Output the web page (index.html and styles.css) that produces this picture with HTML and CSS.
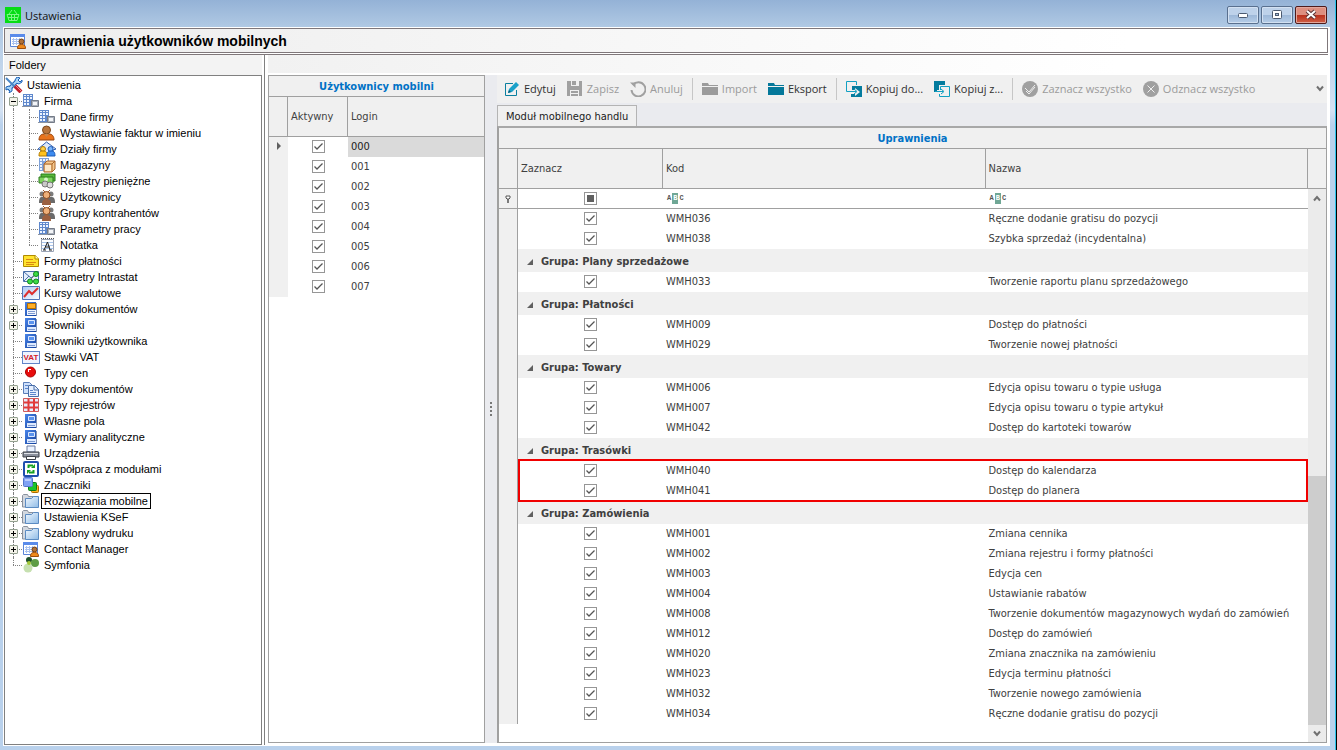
FILE: index.html
```html
<!DOCTYPE html>
<html lang="pl">
<head>
  <meta charset="UTF-8">
  <meta name="viewport" content="width=device-width, initial-scale=1.0">
  <title>Ustawienia</title>
  <link rel="stylesheet" href="styles.css">
</head>
<body>
  <!-- Icon sprite -->
  <svg class="sprite" width="0" height="0" aria-hidden="true">
    <defs>
      <linearGradient id="g-blue" x1="0" y1="0" x2="1" y2="1"><stop offset="0" stop-color="#4a86ea"/><stop offset="1" stop-color="#123f9c"/></linearGradient>
      <linearGradient id="g-folder" x1="0" y1="0" x2="1" y2="1"><stop offset="0" stop-color="#f2f9ff"/><stop offset="1" stop-color="#8fbbe6"/></linearGradient>
      <linearGradient id="g-pale" x1="0" y1="0" x2="1" y2="1"><stop offset="0" stop-color="#a9c8f5"/><stop offset="1" stop-color="#fff"/></linearGradient>
    </defs>
    <symbol id="tools" viewBox="0 0 18 16"><path d="M3 13l9-9" stroke="#1c62b8" stroke-width="4"/><path d="M12 0l-2 3 1 3 3 1 3-2V3l-2 2-2-2 2-2zM1 10l3-1 3 2v3l-3 2 1-2-2-2-2 1z" fill="#a9d6f8" stroke="#1c62b8"/><path d="M4 12l8-8" stroke="#a9d6f8" stroke-width="2"/><path d="M1 1l9 9" stroke="#4a86c4" stroke-width="2"/><path d="M10 9l6 6" stroke="#c01f2c" stroke-width="4"/><path d="M11 9l5 5" stroke="#f0888c"/></symbol>
    <symbol id="building" viewBox="0 0 18 16"><path d="M1 1h10v12H1z" fill="#5f88cc"/><path d="M2 2h2v1H2zM5 2h2v1H5zM8 2h2v1H8zM2 4h2v2H2zM5 4h2v2H5zM8 4h2v2H8zM2 7h2v2H2zM5 7h2v2H5zM2 10h2v2H2zM5 10h2v2H5z" fill="#edf4ff"/><path d="M9.500 7.500h7v6h-7z" fill="#a9afb9" stroke="#747b87"/><path d="M11 9h4v3h-4z" fill="#f2f4f7"/><path d="M0 13.500h10" stroke="#8b93a0"/></symbol>
    <symbol id="person" viewBox="0 0 18 16"><path d="M1 15c0-4 2-6 5-6h5c3 0 5 2 5 6z" fill="#e8731c" stroke="#99440c"/><circle cx="8.500" cy="5" r="4" fill="#b9753c" stroke="#7c481c"/><path d="M6 9l2.500 3L11 9z" fill="#c98448"/></symbol>
    <symbol id="house" viewBox="0 0 18 16"><path d="M0 8l8.500-7L18 8l-3 1v5H3V9z" fill="#dce8fa" stroke="#2d5db0"/><circle cx="5" cy="8" r="2.500" fill="#ffd24a" stroke="#b27a00"/><path d="M1 15c0-4 1-5 4-5s4 1 4 5z" fill="#ffc21e" stroke="#b27a00"/><circle cx="12.500" cy="8" r="2.500" fill="#78b6ff" stroke="#1d5db8"/><path d="M9 15c0-4 1-5 4-5s4 1 4 5z" fill="#3d8bf0" stroke="#1d5db8"/></symbol>
    <symbol id="box" viewBox="0 0 18 16"><path d="M1 1h10v13H1z" fill="#7ea1d8"/><path d="M2 2h2v2H2zM5 2h2v2H5zM8 2h2v2H8zM2 5h2v2H2zM2 8h2v2H2zM2 11h2v2H2z" fill="#edf4ff"/><path d="M6 7l3-3h8v8l-3 3H6z" fill="#f6c98d" stroke="#a9642a"/><path d="M6 7h8v8M14 7l3-3" fill="none" stroke="#a9642a"/><path d="M7 8h6v6H7z" fill="#fde8c8"/></symbol>
    <symbol id="money" viewBox="0 0 18 16"><path d="M3 1h14v7H3z" fill="#57b83a" stroke="#2b7a1c"/><path d="M1 4h14v6H1z" fill="#7fd45f" stroke="#2b7a1c"/><circle cx="8" cy="6.500" r="2" fill="#d6f5c8"/><circle cx="7" cy="11" r="3" fill="#c9c9c9" stroke="#777"/><circle cx="12" cy="12" r="3" fill="#dedede" stroke="#777"/></symbol>
    <symbol id="people" viewBox="0 0 18 16"><circle cx="4" cy="5" r="2.500" fill="#7b7b7b"/><circle cx="13" cy="5" r="2.500" fill="#7b7b7b"/><path d="M1 14c0-5 1-6 3-6h9c3 0 4 1 4 6z" fill="#6a6a6a"/><circle cx="8.500" cy="6" r="3.500" fill="#eeb079" stroke="#8a4c22"/><path d="M4 16c0-4 1-6 4.500-6S13 12 13 16z" fill="#9b6040"/><path d="M5 1l2 2M12 1l-2 2" stroke="#a05a2c"/></symbol>
    <symbol id="note" viewBox="0 0 18 16"><path d="M3.500 2.500h12v12h-12z" fill="#fdfdff" stroke="#9aa3b5"/><path d="M4 5.500h11M4 8.500h11M4 11.500h11" stroke="#a8c4ea"/><path d="M3 1.500h13" stroke="#555" stroke-dasharray="1 1"/><path d="M6 13l3.500-8L12 13M7 10h5M5 13h3M11 13h3" fill="none" stroke="#222"/></symbol>
    <symbol id="card" viewBox="0 0 18 16"><path d="M1.500 2.500h12l3 3v8h-15z" fill="#ffe32e" stroke="#b08a00"/><path d="M13 2v4h4" fill="#fff6a8" stroke="#b08a00"/><path d="M4 6.500h7M4 9.500h10M4 11.500h8" stroke="#d98812"/></symbol>
    <symbol id="mail" viewBox="0 0 18 16"><path d="M1.500 2.500h15v10h-15z" fill="#e6effc" stroke="#4a70a8"/><path d="M2 3l7 6 7-6M2 12l5-5" fill="none" stroke="#4a70a8"/><path d="M7 12l8-8M9 12h5" stroke="#777"/><circle cx="14" cy="5" r="2.500" fill="#3ddc46" stroke="#128a1c"/><circle cx="8" cy="12.500" r="2.500" fill="#3ddc46" stroke="#128a1c"/><circle cx="14" cy="12.500" r="2.500" fill="#3ddc46" stroke="#128a1c"/></symbol>
    <symbol id="chart" viewBox="0 0 18 16"><path d="M.5 1.500h17v13H.5z" fill="url(#g-pale)" stroke="#5376ba"/><path d="M2 12l5-6 3 3 6-6" fill="none" stroke="#dd2f2f" stroke-width="2"/></symbol>
    <symbol id="book-orange" viewBox="0 0 18 16"><path d="M3 1h11v14H3z" fill="url(#g-blue)"/><path d="M5.500 2.500h8v5h-8z" fill="#ffae26" stroke="#b46e00"/><path d="M5 9h9v5H5z" fill="#f2f6ff"/><path d="M6 10.500h7M6 12.500h7" stroke="#7f9bd0"/><path d="M14.500 2v13" stroke="#8193b8"/></symbol>
    <symbol id="book" viewBox="0 0 18 16"><path d="M3 1h11v14H3z" fill="url(#g-blue)"/><path d="M6.500 3.500h6v4h-6z" fill="#5a93ee" stroke="#dce9ff"/><path d="M5 10h9v4H5z" fill="#dce9ff"/><path d="M6 12.500h7" stroke="#7f9bd0"/><path d="M14.500 2v13" stroke="#8193b8"/></symbol>
    <symbol id="ball" viewBox="0 0 18 16"><circle cx="8.500" cy="7" r="5" fill="#e80c0c" stroke="#a00" /><path d="M6 4h3v1H7v2H6z" fill="#fff"/></symbol>
    <symbol id="docs" viewBox="0 0 18 16"><path d="M1.500 1.500h6l3 3v8h-9z" fill="#cfe0fb" stroke="#5a7db8"/><path d="M6.500 4.500h6l4 4v7h-10z" fill="#e6f0ff" stroke="#4a6ea8"/><path d="M12 4v5h5" fill="none" stroke="#4a6ea8"/><path d="M3 4.500h3M3 7.500h3M8 9.500h3M8 11.500h6M8 13.500h6" stroke="#5a86cc"/></symbol>
    <symbol id="grid" viewBox="0 0 18 16"><path d="M1 1h16v14H1z" fill="#e6ecfb"/><path d="M1 5.500h16M1 10.500h16M6.500 1v14M12 1v14" stroke="#e23a3a" stroke-width="2"/><path d="M1.500 1.500h15v13h-15z" fill="none" stroke="#d05a5a"/></symbol>
    <symbol id="printer" viewBox="0 0 18 16"><path d="M5 1h8v6H5z" fill="#eaf2ff" stroke="#6b7ba0"/><path d="M1 7h16v5H1z" fill="#8b909c" stroke="#3c4048"/><path d="M2 8.500h14" stroke="#dfe2e8"/><path d="M4.500 11.500h9v3h-9z" fill="#fff" stroke="#3c4048"/></symbol>
    <symbol id="recycle" viewBox="0 0 18 16"><rect x="2" y="1" width="14" height="14" rx="1" fill="#fff" stroke="#1f4fae" stroke-width="2"/><path d="M6.500 7V4.500H11M11.500 9v2.500H7" fill="none" stroke="#16a022" stroke-width="2"/><path d="M9 7h4V3zM9 9H5v4z" fill="#16a022"/></symbol>
    <symbol id="layers" viewBox="0 0 18 16"><rect x="9.500" y="8.500" width="7" height="7" rx="1" fill="#ffb31c" stroke="#a96b00"/><rect x="6.500" y="5.500" width="8" height="8" rx="1" fill="#19c42b" stroke="#0a7a14"/><rect x="1.500" y="0.500" width="9" height="9" rx="1" fill="#7fa2f4" stroke="#5477cc"/><path d="M3 2h6v2H3z" fill="#b9cdfd"/></symbol>
    <symbol id="folder" viewBox="0 0 18 16"><path d="M.5 14V2.500l1-1h4l1 2h7V14z" fill="#d3d8df" stroke="#89919d"/><path d="M3.500 14.500v-9h6l2-2h5v11z" fill="url(#g-folder)" stroke="#5b8bc2"/></symbol>
    <symbol id="contact" viewBox="0 0 18 16"><path d="M1.500 1.500h14v12h-14z" fill="#fff" stroke="#5a84d8"/><path d="M1 1h15v3H1z" fill="#5a8bea"/><path d="M3 6.500h9M3 8.500h9M3 10.500h9M4.500 5v7M7.500 5v7M10.500 5v7" stroke="#a8c1f0"/><circle cx="12.500" cy="8.500" r="2.500" fill="#b07038" stroke="#6e3d12"/><path d="M8.500 15.500c0-3 1-4 4-4s4 1 4 4z" fill="#f08a1c" stroke="#9c4c0a"/></symbol>
    <symbol id="symfonia" viewBox="0 0 18 16"><circle cx="7" cy="3" r="3" fill="#1d4f28"/><circle cx="13" cy="6" r="4" fill="#5d9c44"/><circle cx="6" cy="11" r="4.500" fill="#c6e0b0"/><circle cx="7" cy="6" r="2" fill="#a3c837"/></symbol>
    <symbol id="basket" viewBox="0 0 16 16"><path d="M0 0h16v16H0z" fill="#06dc16"/><path d="M2 7.500h12l-2 6H4zM4 7l3-4M12 7L9 3M6.500 8v5M9.500 8v5M3 10.500h10" fill="none" stroke="#7df786"/></symbol>

    <symbol id="edit" viewBox="0 0 16 16"><path d="M9 2.500H1.500v12h11V9" fill="none" stroke="#0a7f9f"/><path d="M4 12l1-4 7-7 3 3-7 7z" fill="#1ba1c9"/><path d="M4 12l1-3 2 2z" fill="#045a78"/></symbol>
    <symbol id="save" viewBox="0 0 16 16"><path d="M0 0h15v15H0z" fill="#a0a0a0"/><path d="M4 0h8v5H4zM3 9h9v6H3z" fill="#f0f0f0"/><path d="M5 0h4v4H5zM4 10h7v2H4zM4 13h7v2H4z" fill="#a0a0a0"/></symbol>
    <symbol id="undo" viewBox="0 0 16 16"><path d="M3 4a7 7 0 1 1-1.500 5" fill="none" stroke="#a0a0a0" stroke-width="2"/><path d="M0 1.500h5.500V7z" fill="#a0a0a0"/></symbol>
    <symbol id="dir" viewBox="0 0 16 16"><path d="M0 2h6l1 2h9v1H0zM0 6h16v8H0z" fill="currentColor"/></symbol>
    <symbol id="copy-to" viewBox="0 0 16 16"><path d="M6 5h10v11H5v-3h4v2l5-4-5-4v2H6z" fill="#047c9e"/><path d="M4 10.500H.5V.5h10V4M4 10.500h6M8 8l3 2.500L8 13" fill="none" stroke="#12a0c2"/></symbol>
    <symbol id="copy-from" viewBox="0 0 16 16"><path d="M0 0h11v4H5v5H3v2H0z" fill="#047c9e"/><path d="M12 5.500h3.500v10h-10V13M6.500 9V5.500H12M1 10.500h8M7 8l3 2.500L7 13" fill="none" stroke="#12a0c2"/></symbol>
    <symbol id="tick" viewBox="0 0 16 16"><circle cx="8" cy="8" r="8" fill="#a0a0a0"/><path d="M3 7l4 4 6-7M4 10l3 3 6-7" fill="none" stroke="#f0f0f0"/></symbol>
    <symbol id="cross" viewBox="0 0 16 16"><circle cx="8" cy="8" r="8" fill="#a0a0a0"/><path d="M4.500 4.500l7 7M11.500 4.500l-7 7" stroke="#f0f0f0"/></symbol>
    <symbol id="chevron" viewBox="0 0 8 8"><path d="M1 1.500l3 3.500 3-3.500" fill="none" stroke="#707070" stroke-width="2"/></symbol>
    <symbol id="pin" viewBox="0 0 6 8"><path d="M1 1h4v2L4 4H2L1 3z" fill="#fff" stroke="#555"/><path d="M3 4v4" stroke="#555" stroke-width="1.500"/></symbol>
  </svg>

  <div class="window">
    <header class="title-bar">
      <svg class="app-icon"><use href="#basket"/></svg>
      <span class="title">Ustawienia</span>
      <div class="window-buttons">
        <button aria-label="Minimalizuj"><svg width="12" height="12"><rect x="1.500" y="4.500" width="9" height="4" rx="1" fill="#fff" stroke="#4b5a70"/></svg></button>
        <button aria-label="Maksymalizuj"><svg width="12" height="12"><rect x="1.500" y="1.500" width="9" height="8" rx="1" fill="#fff" stroke="#4b5a70"/><rect x="4.500" y="4.500" width="3" height="2" fill="#a9bfdc" stroke="#4b5a70"/></svg></button>
        <button class="close" aria-label="Zamknij"><svg width="12" height="12"><path d="M2 2l8 7M10 2l-8 7" stroke="#5b3436" stroke-width="4"/><path d="M2 2l8 7M10 2l-8 7" stroke="#fff" stroke-width="2"/></svg></button>
      </div>
    </header>

    <div class="client">
      <div class="page-title">
        <svg class="icon"><use href="#contact"/></svg>
        <h1>Uprawnienia użytkowników mobilnych</h1>
      </div>

      <div class="workspace">
        <aside class="sidebar">
          <h2>Foldery</h2>
          <ul class="tree" id="tree"></ul>
        </aside>

        <main class="main">
          <div class="strip"></div>
          <div class="panels">
            <section class="users">
              <h3 class="grid-title">Użytkownicy mobilni</h3>
              <table class="grid">
                <colgroup><col class="col-mark"><col class="col-active"><col></colgroup>
                <thead><tr><th></th><th>Aktywny</th><th>Login</th></tr></thead>
                <tbody id="users"></tbody>
              </table>
            </section>

            <div class="splitter"></div>

            <section class="permissions">
              <div class="toolbar">
                <button class="tool"><svg><use href="#edit"/></svg>Edytuj</button>
                <button class="tool" disabled><svg><use href="#save"/></svg>Zapisz</button>
                <button class="tool" disabled><svg><use href="#undo"/></svg>Anuluj</button>
                <span class="separator"></span>
                <button class="tool" disabled><svg><use href="#dir"/></svg>Import</button>
                <button class="tool"><svg class="teal"><use href="#dir"/></svg>Eksport</button>
                <span class="separator"></span>
                <button class="tool"><svg><use href="#copy-to"/></svg>Kopiuj do...</button>
                <button class="tool"><svg><use href="#copy-from"/></svg>Kopiuj z...</button>
                <span class="separator"></span>
                <button class="tool" disabled><svg><use href="#tick"/></svg>Zaznacz wszystko</button>
                <button class="tool" disabled><svg><use href="#cross"/></svg>Odznacz wszystko</button>
                <button class="more" aria-label="Więcej"><svg class="arrow"><use href="#chevron"/></svg></button>
              </div>
              <div class="tabs"><button class="tab">Moduł mobilnego handlu</button></div>

              <div class="tab-page">
                <h3 class="grid-title">Uprawnienia</h3>
                <table class="grid">
                  <colgroup><col class="col-mark"><col class="col-check"><col><col><col class="col-scroll"></colgroup>
                  <thead><tr><th></th><th>Zaznacz</th><th>Kod</th><th>Nazwa</th><th></th></tr></thead>
                </table>
                <div class="grid-body">
                  <div class="rows">
                    <table class="grid" id="permissions">
                      <colgroup><col class="col-mark"><col class="col-check"><col><col></colgroup>
                      <tbody>
                        <tr class="filter">
                          <td class="mark"><svg class="pin"><use href="#pin"/></svg></td>
                          <td class="check"><input type="checkbox" class="mixed" aria-label="Filtr zaznaczenia"></td>
                          <td><span class="abc">A<b>B</b>C</span></td>
                          <td><span class="abc">A<b>B</b>C</span></td>
                        </tr>
                      </tbody>
                    </table>
                  </div>
                  <div class="scrollbar">
                    <button aria-label="W górę"><svg class="arrow up"><use href="#chevron"/></svg></button>
                    <div class="track"><div class="thumb"></div></div>
                    <button aria-label="W dół"><svg class="arrow"><use href="#chevron"/></svg></button>
                  </div>
                </div>
              </div>
            </section>
          </div>
        </main>
      </div>
    </div>
  </div>

  <script>
    // [icon, label, level, expander]
    const folders = [
      ['tools', 'Ustawienia', 0], ['building', 'Firma', 1, '-'],
      ['building', 'Dane firmy', 2], ['person', 'Wystawianie faktur w imieniu', 2],
      ['house', 'Działy firmy', 2], ['box', 'Magazyny', 2],
      ['money', 'Rejestry pieniężne', 2], ['people', 'Użytkownicy', 2],
      ['people', 'Grupy kontrahentów', 2], ['building', 'Parametry pracy', 2],
      ['note', 'Notatka', 2, 'last'], ['card', 'Formy płatności', 1],
      ['mail', 'Parametry Intrastat', 1], ['chart', 'Kursy walutowe', 1],
      ['book-orange', 'Opisy dokumentów', 1, '+'], ['book', 'Słowniki', 1, '+'],
      ['book', 'Słowniki użytkownika', 1], ['vat', 'Stawki VAT', 1],
      ['ball', 'Typy cen', 1], ['docs', 'Typy dokumentów', 1, '+'],
      ['grid', 'Typy rejestrów', 1, '+'], ['book', 'Własne pola', 1, '+'],
      ['book', 'Wymiary analityczne', 1, '+'], ['printer', 'Urządzenia', 1, '+'],
      ['recycle', 'Współpraca z modułami', 1, '+'], ['layers', 'Znaczniki', 1, '+'],
      ['folder', 'Rozwiązania mobilne', 1, '+'], ['folder', 'Ustawienia KSeF', 1, '+'],
      ['folder', 'Szablony wydruku', 1, '+'], ['contact', 'Contact Manager', 1, '+'],
      ['symfonia', 'Symfonia', 1, 'last']
    ];

    const groups = [
      [null, [['036', 'Ręczne dodanie gratisu do pozycji'], ['038', 'Szybka sprzedaż (incydentalna)']]],
      ['Plany sprzedażowe', [['033', 'Tworzenie raportu planu sprzedażowego']]],
      ['Płatności', [['009', 'Dostęp do płatności'], ['029', 'Tworzenie nowej płatności']]],
      ['Towary', [['006', 'Edycja opisu towaru o typie usługa'], ['007', 'Edycja opisu towaru o typie artykuł'], ['042', 'Dostęp do kartoteki towarów']]],
      ['Trasówki', [['040', 'Dostęp do kalendarza'], ['041', 'Dostęp do planera']]],
      ['Zamówienia', [
        ['001', 'Zmiana cennika'], ['002', 'Zmiana rejestru i formy płatności'],
        ['003', 'Edycja cen'], ['004', 'Ustawianie rabatów'],
        ['008', 'Tworzenie dokumentów magazynowych wydań do zamówień'],
        ['012', 'Dostęp do zamówień'], ['020', 'Zmiana znacznika na zamówieniu'],
        ['023', 'Edycja terminu płatności'], ['032', 'Tworzenie nowego zamówienia'],
        ['034', 'Ręczne dodanie gratisu do pozycji']
      ]]
    ];

    document.getElementById('tree').innerHTML = folders.map(([icon, label, level, mark]) => {
      const sign = mark === '+' || mark === '-';
      const guide = level === 2 ? '<span class="guide"></span>' : '';
      const button = sign ? `<button class="${mark === '+' ? 'plus' : 'minus'}" aria-label="${label}"></button>` : '';
      const branch = level ? `<span class="branch ${mark === 'last' ? 'last' : ''}">${button}</span>` : '';
      const image = icon === 'vat' ? '<span class="icon vat">VAT</span>' : `<svg class="icon"><use href="#${icon}"/></svg>`;
      const selected = label === 'Rozwiązania mobilne' ? 'selected' : '';
      return `<li>${guide}${branch}${image}<span class="label ${selected}">${label}</span></li>`;
    }).join('');

    document.getElementById('users').innerHTML = Array.from({ length: 8 }, (_, i) => `
      <tr class="${i === 0 ? 'current' : ''}">
        <td class="mark"></td>
        <td class="check"><input type="checkbox" checked aria-label="Aktywny 00${i}"></td>
        <td>00${i}</td>
      </tr>`).join('');

    document.getElementById('permissions').insertAdjacentHTML('beforeend', groups.map(([name, rows]) => `
      ${name ? `<tbody><tr class="group"><td class="mark"></td><th colspan="3">Grupa: ${name}</th></tr></tbody>` : ''}
      <tbody class="${name === 'Trasówki' ? 'highlight' : ''}">${rows.map(([code, text]) => `
        <tr>
          <td class="mark"></td>
          <td class="check"><input type="checkbox" checked aria-label="WMH${code}"></td>
          <td>WMH${code}</td>
          <td>${text}</td>
        </tr>`).join('')}
      </tbody>`).join(''));

    document.querySelector('.mixed').indeterminate = true;
  </script>
</body>
</html>
```
FILE: styles.css
```css
* {
  box-sizing: border-box;
}

body {
  margin: 0;
  height: 100vh;
  overflow: hidden;
  border-right: 1px solid #000;
  font-family: "DejaVu Sans Condensed", Tahoma, sans-serif;
  font-size: 11px;
  color: #404040;
}

h1, h2, h3, ul {
  margin: 0;
  padding: 0;
}

button {
  margin: 0;
  padding: 0;
  border: none;
  background: none;
  font: inherit;
  color: inherit;
}

.sprite {
  position: absolute;
}

.window {
  height: 100%;
  display: flex;
  flex-direction: column;
  padding: 0 5px 4px 3px;
  border-right: 1px solid #2cc3ec;
  background: linear-gradient(#94b2d6, #b0c9e4 27px, #d4e2f3 110px, #b9d1ec 125px);
}

/* Title bar */
.title-bar {
  flex: none;
  height: 27px;
  display: flex;
  align-items: center;
  gap: 4px;
  padding: 3px 3px 0 2px;
  font-family: "Open Sans", sans-serif;
  color: #111;
}

.app-icon {
  width: 16px;
  height: 16px;
}

.window-buttons {
  margin-left: auto;
  display: flex;
  gap: 2px;
}

.window-buttons button {
  width: 32px;
  height: 18px;
  display: flex;
  align-items: center;
  justify-content: center;
  border: 1px solid #59708f;
  border-radius: 2px;
  box-shadow: inset 0 0 0 1px #d3e1f2;
  background: linear-gradient(#bed2ea 50%, #9db8d8 50%, #b6cde8);
}

.window-buttons .close {
  border-color: #4f1a1a;
  box-shadow: inset 0 0 0 1px #e3a79c;
  background: linear-gradient(#dd8f80 50%, #b9301c 50%, #d06047);
}

.client {
  flex: 1;
  min-height: 0;
  display: flex;
  flex-direction: column;
  border: 1px solid #fff;
  background: #fff;
}

.page-title {
  flex: none;
  height: 25px;
  margin-bottom: 1px;
  margin-right: 1px;
  display: flex;
  align-items: center;
  gap: 4px;
  padding: 0 4px;
  border: 1px solid #7f777a;
  background: linear-gradient(to right, #ededed, #fff 85%);
}

.page-title h1 {
  font: bold 14px "Liberation Sans", Arial, sans-serif;
  color: #000;
}

.icon {
  flex: none;
  width: 18px;
  height: 16px;
}

.vat {
  height: 13px;
  border: 1px solid #6184c8;
  background: #eef3ff;
  font-size: 8px;
  font-weight: bold;
  line-height: 11px;
  text-align: center;
  color: #d3202a;
}

.workspace {
  flex: 1;
  min-height: 0;
  margin-right: 1px;
  display: flex;
  border-top: 1px solid #7f777a;
}

/* Folder tree */
.sidebar {
  flex: none;
  width: 261px;
  padding: 0 2px 0 0;
  border-right: 1px solid #808080;
  display: flex;
  flex-direction: column;
  background: #fff;
}

.sidebar h2 {
  height: 20px;
  padding-left: 5px;
  font: 11px/20px "Liberation Sans", Arial, sans-serif;
  color: #000;
  background: #f3f3f3;
}

.tree {
  flex: 1;
  list-style: none;
  padding-top: 1px;
  border: 1px solid #808080;
  background: #fff;
  font-family: "Liberation Sans", Arial, sans-serif;
  color: #000;
}

.tree li {
  height: 16px;
  display: flex;
  align-items: center;
}

.guide,
.branch {
  flex: none;
  position: relative;
  height: 16px;
  width: 16px;
  padding-left: 8px;
}

.branch {
  width: 17px;
}

.guide::before,
.branch::before {
  content: "";
  display: block;
  height: 100%;
  border-left: 1px dotted #808080;
}

.branch.last::before {
  height: 8px;
}

.branch::after {
  content: "";
  position: absolute;
  left: 8px;
  right: 0;
  top: 8px;
  border-top: 1px dotted #808080;
}

.branch button {
  position: absolute;
  z-index: 1;
  left: 4px;
  top: 4px;
  width: 9px;
  height: 9px;
  border: 1px solid #93a08f;
  border-radius: 1px;
  background: linear-gradient(#000, #000) center / 5px 1px no-repeat, #f4f3ea;
}

.branch .plus {
  background: linear-gradient(#000, #000) center / 5px 1px no-repeat, linear-gradient(#000, #000) center / 1px 5px no-repeat, #f4f3ea;
}

.label {
  margin-left: 1px;
  padding: 0 2px;
  border: 1px solid transparent;
  line-height: 14px;
  white-space: nowrap;
}

.label.selected {
  border-color: #000;
}

/* Main area */
.main {
  flex: 1;
  min-width: 0;
  display: flex;
  flex-direction: column;
  padding-left: 3px;
}

.strip {
  flex: none;
  height: 18px;
  margin-bottom: 2px;
  background: linear-gradient(to right, #f1f1f1, #fff 80%);
}

.panels {
  flex: 1;
  min-height: 0;
  margin-right: 1px;
  margin-bottom: 2px;
  display: flex;
  background: #eaebef;
}

.users {
  flex: none;
  width: 217px;
  border: 1px solid #a0a0a0;
  background: #fff;
}

.splitter {
  flex: none;
  width: 12px;
  background: repeating-linear-gradient(#777 0 2px, transparent 2px 4px) center / 2px 14px no-repeat;
}

.permissions {
  flex: 1;
  min-width: 0;
  display: flex;
  flex-direction: column;
}

.toolbar {
  flex: none;
  height: 28px;
  display: flex;
  align-items: center;
  gap: 11px;
  padding: 0 3px 0 7px;
  background: #f0f0f0;
  font-family: "Open Sans", sans-serif;
}

.tool {
  display: flex;
  align-items: center;
  gap: 4px;
  line-height: 20px;
  color: #303030;
  white-space: nowrap;
}

.tool svg {
  width: 16px;
  height: 16px;
}

.tool:disabled {
  color: #9b9b9b;
}

.tool .teal {
  color: #04789a;
}

.separator {
  width: 1px;
  height: 22px;
  margin: 0 -2px;
  background: #c6c6c6;
}

.more {
  margin-left: auto;
}

.arrow {
  display: block;
  width: 8px;
  height: 8px;
}

.up {
  transform: scaleY(-1);
}

.tabs {
  flex: none;
  height: 23px;
  display: flex;
  align-items: flex-end;
}

.tab {
  height: 21px;
  padding: 0 8px;
  border: 1px solid #b4b4b4;
  border-bottom: none;
  background: #f0f0f0;
  color: #202020;
}

.tab-page {
  flex: 1;
  min-height: 0;
  display: flex;
  flex-direction: column;
  border: 1px solid #a0a0a0;
  border-top: 2px solid #a8a8a8;
  border-left-width: 2px;
  background: #fff;
}

/* Grids */
.grid-title {
  flex: none;
  height: 21px;
  border-bottom: 1px solid #a0a0a0;
  background: #f0f0f0;
  font-size: 11px;
  line-height: 21px;
  text-align: center;
  color: #0072c6;
}

.grid {
  width: 100%;
  table-layout: fixed;
  border-spacing: 0;
}

.col-mark {
  width: 19px;
}

.col-active {
  width: 60px;
}

.col-check {
  width: 145px;
}

.col-scroll {
  width: 18px;
}

.grid thead th {
  height: 40px;
  padding: 0 3px;
  border-right: 1px solid #a0a0a0;
  border-bottom: 1px solid #a0a0a0;
  background: #f0f0f0;
  font-weight: normal;
  text-align: left;
}

.grid thead th:last-child {
  border-right: none;
}

.grid td {
  height: 20px;
  padding: 0 3px;
  line-height: 18px;
  white-space: nowrap;
}

.grid td.mark {
  padding: 0;
  border-right: 1px solid #a0a0a0;
  background: #f0f0f0;
  text-align: center;
}

.users td.mark {
  border-right: none;
}

.grid td.check {
  padding: 0 0 1px;
  text-align: center;
}

.current .mark::before {
  content: "";
  display: inline-block;
  border: 4px solid transparent;
  border-left-color: #606060;
  border-right: none;
}

.current td:last-child {
  background: #dadada;
  color: #202020;
}

input[type="checkbox"] {
  appearance: none;
  display: block;
  width: 13px;
  height: 13px;
  margin: 0 auto;
  border: 1px solid #969696;
  background: #fff;
}

input[type="checkbox"]:checked {
  background: #fff url("data:image/svg+xml,%3Csvg xmlns='http://www.w3.org/2000/svg' viewBox='0 0 11 11'%3E%3Cpath d='M1.500 5.500l2.500 2.500L9.500 2.500' fill='none' stroke='%23555' stroke-width='1.300'/%3E%3C/svg%3E");
}

input[type="checkbox"]:indeterminate {
  background: linear-gradient(#606060, #606060) center / 7px 7px no-repeat;
}

.grid-body {
  flex: 1;
  min-height: 0;
  display: flex;
}

.rows {
  flex: 1;
  min-width: 0;
  overflow: hidden;
}

.grid .filter td {
  border-bottom: 1px solid #a0a0a0;
}

.pin {
  display: block;
  width: 6px;
  height: 8px;
  margin: 0 auto;
}

.abc {
  display: flex;
  gap: 1px;
  padding-left: 1px;
  font: bold 7px/11px "Liberation Mono", monospace;
  color: #555;
}

.abc b {
  padding: 0 1px;
  background: #6fa795;
  color: #fff;
}

.group th {
  height: 23px;
  padding: 1px 9px 0;
  background: #f0f0f0;
  text-align: left;
}

.group th::before {
  content: "";
  display: inline-block;
  margin-right: 8px;
  border-left: 6px solid transparent;
  border-bottom: 6px solid #606060;
}

.highlight {
  position: relative;
}

.highlight::after {
  content: "";
  position: absolute;
  top: -2px;
  right: 0;
  bottom: -1px;
  left: 19px;
  border: 2px solid #f00000;
}

.scrollbar {
  flex: none;
  width: 18px;
  display: flex;
  flex-direction: column;
  background: #ebebeb;
}

.scrollbar button {
  height: 17px;
  display: flex;
  align-items: center;
  justify-content: center;
}

.track {
  flex: 1;
  display: flex;
  align-items: flex-end;
}

.thumb {
  width: 100%;
  height: 48%;
  background: #cdcdcd;
}
```
